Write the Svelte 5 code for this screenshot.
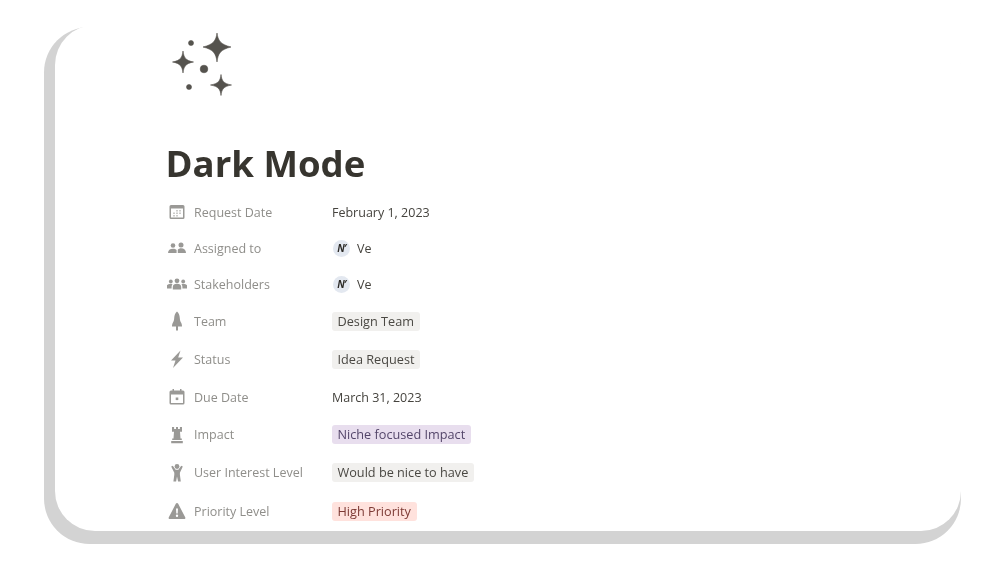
<script>
	const rows = [
		{ icon: 'cal', label: 'Request Date', text: 'February 1, 2023', h: 36 },
		{ icon: 'two', label: 'Assigned to', person: 'Ve', h: 36 },
		{ icon: 'three', label: 'Stakeholders', person: 'Ve', h: 36 },
		{ icon: 'tree', label: 'Team', chip: 'Design Team', h: 38 },
		{ icon: 'bolt', label: 'Status', chip: 'Idea Request', h: 38 },
		{ icon: 'due', label: 'Due Date', text: 'March 31, 2023', h: 38 },
		{ icon: 'rook', label: 'Impact', chip: 'Niche focused Impact', tone: 'purple', h: 37 },
		{ icon: 'man', label: 'User Interest Level', chip: 'Would be nice to have', h: 39 },
		{ icon: 'warn', label: 'Priority Level', chip: 'High Priority', tone: 'red', h: 38 }
	];
</script>

<div class="page">
	<div class="card">
		<div class="content">
			<svg class="sparkles" width="64" height="64" viewBox="0 0 64 64">
				<path d="M47 1C48 8.500 50.500 12.500 61 15C50.500 17.500 48 21.500 47 30C46 21.500 43.500 17.500 33 15C43.500 12.500 46 8.500 47 1Z" />
				<path d="M13 19C13.800 25.500 15.500 28.500 23.500 30C15.500 31.500 13.800 34.500 13 41C12.200 34.500 10.500 31.500 2.500 30C10.500 28.500 12.200 25.500 13 19Z" />
				<path d="M51 42.500C51.800 49 53.500 51.500 61.500 53C53.500 54.500 51.800 57 51 63.500C50.200 57 48.500 54.500 40.500 53C48.500 51.500 50.200 49 51 42.500Z" />
				<circle cx="21" cy="11" r="2.500" />
				<circle cx="34" cy="37" r="3.800" />
				<circle cx="19" cy="55" r="2.500" />
			</svg>

			<h1>Dark Mode</h1>

			<div class="props">
				{#each rows as row}
					<div class="row" style="height: {row.h}px">
						<div class="name">
							<svg class="icon" width="20" height="20" viewBox="0 0 20 20">
								{#if row.icon === 'cal'}
									<path fill-rule="evenodd" d="M4 3h12a1.500 1.500 0 0 1 1.500 1.500v11A1.500 1.500 0 0 1 16 17H4a1.500 1.500 0 0 1-1.500-1.500v-11A1.500 1.500 0 0 1 4 3ZM4 6.500v9h12v-9Z" />
									<path opacity="0.5" d="M9 8h2v1.500H9ZM12 8h2v1.500h-2ZM6 10.500h2V12H6ZM9 10.500h2V12H9ZM12 10.500h2V12h-2ZM6 13h2v1.500H6ZM9 13h2v1.500H9Z" />
								{:else if row.icon === 'two'}
									<circle cx="6" cy="7.500" r="2.300" />
									<circle cx="14" cy="7" r="2.500" />
									<path d="M1 15c0-2.800 2-4.300 5-4.300 1.500 0 2.800.4 3.600 1.200V15ZM10.800 15v-3.300c.8-1 2-1.500 3.200-1.500 3 0 5 1.800 5 4.800Z" />
								{:else if row.icon === 'three'}
									<circle cx="3.800" cy="7.500" r="1.900" />
									<circle cx="10" cy="6.800" r="2.400" />
									<circle cx="16.200" cy="7.500" r="1.900" />
									<path d="M-.5 14.500v-1.500c0-2 1.500-3 4.300-3 .7 0 1.300.1 1.800.3-.7.8-1 1.500-1 2.700v1.500ZM5.800 15.500v-2.500C5.800 10.800 7.500 9.800 10 9.800s4.200 1 4.200 3.200v2.500ZM15.400 14.500v-1.500c0-1.200-.3-1.900-1-2.700.5-.2 1.100-.3 1.800-.3 2.800 0 4.300 1 4.300 3v1.500Z" />
								{:else if row.icon === 'tree'}
									<path d="M10 .5c1.800 1.600 2.600 3.800 2.800 6.500.1 1.800.4 3.200 1.200 4.600.6 1 1 2.200 1 3.900h-4v4H9v-4H5c0-1.700.4-2.900 1-3.900.8-1.400 1.100-2.800 1.200-4.600.2-2.700 1-4.900 2.800-6.500Z" />
								{:else if row.icon === 'bolt'}
									<path d="M13.500 1.500 4 11.500h4.500L6 19 16 8.500h-4.800Z" />
								{:else if row.icon === 'due'}
									<path fill-rule="evenodd" d="M4 3.500h1.500V2H7v1.500h6V2h1.500v1.500H16A1.500 1.500 0 0 1 17.500 5v11a1.500 1.500 0 0 1-1.500 1.500H4A1.500 1.500 0 0 1 2.500 16V5A1.500 1.500 0 0 1 4 3.500ZM4 7.500v8.500h12V7.500Z" />
									<path d="M8.700 10.500h2.600v2.600H8.700Z" />
								{:else if row.icon === 'rook'}
									<path d="M5 2h2.100v2h1.900V2h2v2h1.900V2H15v4.800h-2l.5 6.700h1.300V15H5.200v-1.500h1.300L7 6.800H5ZM4.200 16h11.600v2.300H4.200Z" />
								{:else if row.icon === 'man'}
									<circle cx="10" cy="3.500" r="2.400" />
									<path d="M4.200 3.500 5.800 2.800 8.600 6.800h2.800l2.800-4 1.600.7-2.900 6.300v2l.9 6.700h-2.700L10 13.500l-.9 5H6.400l.9-6.700v-2Z" />
								{:else if row.icon === 'warn'}
									<path fill-rule="evenodd" d="M10 2c.5 0 .9.300 1.200.8l7 13.500c.5 1 0 1.700-1 1.700h-14.400c-1 0-1.500-.7-1-1.700l7-13.500c.3-.5.700-.8 1.200-.8ZM9 7.500l.3 5h1.400l.3-5ZM10 13.500a1.200 1.200 0 1 0 0 2.400 1.200 1.200 0 0 0 0-2.400Z" />
								{/if}
							</svg>
							<span>{row.label}</span>
						</div>
						{#if row.chip}
							<span class="chip {row.tone ?? ''}">{row.chip}</span>
						{:else if row.person}
							<span class="avatar">N′</span>
							<span class="value">{row.person}</span>
						{:else}
							<span class="value">{row.text}</span>
						{/if}
					</div>
				{/each}
			</div>
		</div>
	</div>
</div>

<style>
	:global(body) {
		background: #fff;
	}

	.page {
		box-sizing: border-box;
		height: 565px;
		padding: 25px 44px 0 55px;
	}

	.card {
		box-sizing: border-box;
		height: 506px;
		padding: 7px 0 0 111px;
		background: #fff;
		border-radius: 40px;
		box-shadow: -5.5px 7.5px 0 5.5px #d3d3d3;
		font-family: 'Open Sans', sans-serif;
	}

	.content {
		filter: blur(0.4px);
	}

	.sparkles {
		display: block;
		margin-left: 4px;
		fill: #55534e;
		stroke: #55534e;
		stroke-width: 0.6;
		stroke-linejoin: round;
	}

	h1 {
		margin: 42px 0 6px;
		margin-left: -0.5px;
		font-size: 36.6px;
		line-height: 50px;
		font-weight: 700;
		color: #37352f;
	}

	.row {
		display: flex;
		align-items: center;
		font-size: 12.5px;
	}

	.name {
		display: flex;
		align-items: center;
		width: 166px;
		flex: none;
		color: #8f8e8a;
	}

	.icon {
		flex: none;
		margin: 0 7px 0 1px;
		fill: #9a9996;
	}

	.value {
		color: #45433e;
	}

	.avatar {
		width: 17px;
		height: 17px;
		margin: 0 7px 0 1px;
		border-radius: 50%;
		background: #e3e8f0;
		color: #2b2a26;
		font-size: 10px;
		font-weight: 700;
		font-style: italic;
		letter-spacing: -1px;
		line-height: 17px;
		text-align: center;
	}

	.chip {
		padding: 0 6px 0 5.500px;
		height: 19px;
		font-size: 12.7px;
		line-height: 19px;
		border-radius: 3px;
		background: #f1f0ee;
		color: #4a4843;
	}

	.chip.purple {
		background: #e8deee;
		color: #54466a;
	}

	.chip.red {
		background: #ffe2dd;
		color: #7d3a34;
	}
</style>
